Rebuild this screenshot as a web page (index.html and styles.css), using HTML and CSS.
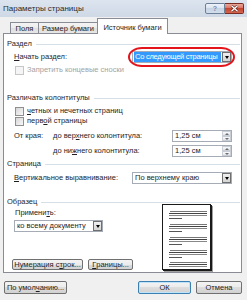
FILE: index.html
```html
<!DOCTYPE html>
<html lang="ru">
<head>
    <meta charset="UTF-8">
    <title>Параметры страницы</title>
    <link rel="stylesheet" href="styles.css">
</head>
<body>
    <!-- заголовок окна -->
    <div class="titlebar">
        <span class="title">Параметры страницы</span>
        <div class="caption">
            <span class="cap-btn cap-help">?</span>
            <span class="cap-btn cap-close">
                <svg width="9" height="7" viewBox="0 0 9 7"><path d="M1.5 0.8 L7.5 6.2 M7.5 0.8 L1.5 6.2" stroke="#5a1d16" stroke-width="2.6"/><path d="M1.5 0.8 L7.5 6.2 M7.5 0.8 L1.5 6.2" stroke="#fff" stroke-width="1.4"/></svg>
            </span>
        </div>
    </div>

    <!-- вкладки -->
    <div class="tabs">
        <span class="tab tab-fields">Поля</span>
        <span class="tab tab-size">Размер бумаги</span>
        <span class="tab tab-source active">Источник бумаги</span>
    </div>

    <div class="panel">
        <div class="group-title">Раздел</div>
        <div class="row row-start">
            <span class="label"><u>Н</u>ачать раздел:</span>
            <div class="combo combo-start">
                <span class="combo-text selected">Со следующей страницы</span>
                <span class="drop"></span>
                <span class="mark"></span>
            </div>
        </div>
        <div class="row row-check">
            <span class="check disabled"></span>
            <span class="label muted">Запретить концевые сноски</span>
        </div>

        <div class="group-title gt-headers">Различать колонтитулы</div>
        <div class="row row-check row-cb1">
            <span class="check"></span>
            <span class="label"><u>ч</u>етных и нечетных страниц</span>
        </div>
        <div class="row row-check">
            <span class="check"></span>
            <span class="label">перв<u>о</u>й страницы</span>
        </div>
        <div class="row row-spin">
            <span class="edge-label">От края:</span>
            <span class="label">до вер<u>х</u>него колонтитула:</span>
            <div class="spin">
                <span class="spin-text">1,25 см</span>
                <span class="spin-btns"><span class="spin-btn up"></span><span class="spin-btn down"></span></span>
            </div>
        </div>
        <div class="row row-spin row-spin2">
            <span class="edge-label"></span>
            <span class="label">до ни<u>ж</u>него колонтитула:</span>
            <div class="spin">
                <span class="spin-text">1,25 см</span>
                <span class="spin-btns"><span class="spin-btn up"></span><span class="spin-btn down"></span></span>
            </div>
        </div>

        <div class="group-title gt-page">Страница</div>
        <div class="row row-valign">
            <span class="label"><u>В</u>ертикальное выравнивание:</span>
            <div class="combo combo-valign">
                <span class="combo-text">По верхнему краю</span>
                <span class="drop"></span>
            </div>
        </div>

        <div class="group-title gt-sample">Образец</div>
        <div class="sample">
            <div class="sample-left">
                <div class="apply-label">Примени<u>т</u>ь:</div>
                <div class="combo combo-apply">
                    <span class="combo-text">ко всему документу</span>
                    <span class="drop"></span>
                </div>
                <div class="line-btns">
                    <span class="btn btn-numbering">Нумерация с<u>т</u>рок...</span>
                    <span class="btn btn-borders"><u>Г</u>раницы...</span>
                </div>
            </div>
            <div class="page">
                <svg width="47" height="64" viewBox="0 0 47 64">
                    <defs>
                        <g id="para">
                            <path d="M7 0.5 H44" stroke="#777" />
                            <path d="M6 2.5 H44" stroke="#444" />
                            <path d="M6 4.5 H44" stroke="#888" />
                            <path d="M6 7.5 H19" stroke="#555" />
                        </g>
                    </defs>
                    <use href="#para" y="6"/>
                    <use href="#para" y="19"/>
                    <use href="#para" y="32"/>
                    <use href="#para" y="45"/>
                    <use href="#para" y="57"/>
                </svg>
            </div>
        </div>
    </div>

    <!-- кнопки окна -->
    <div class="footer">
        <span class="btn btn-default">По умол<u>ч</u>анию...</span>
        <span class="btn btn-ok">ОК</span>
        <span class="btn btn-cancel">Отмена</span>
    </div>
</body>
</html>
```

FILE: styles.css
```css
*{
    margin: 0;
    padding: 0;
    box-sizing: border-box;
}
body{
    width: 247px;
    height: 300px;
    overflow: hidden;
    background-color: #f0f0f0;
    font-family: "Liberation Sans", Arial, sans-serif;
    font-size: 7.5px;
    color: #1e1e1e;
}
u{
    text-decoration-thickness: 1px;
    text-underline-offset: 1px;
}

/* заголовок */
.titlebar{
    height: 17px;
    display: flex;
    align-items: flex-start;
    background: linear-gradient(#dbe4ef, #cfd9e6);
}
.title{
    margin: 4px 0 0 3px;
    font-size: 8px;
    line-height: 9px;
    color: #2b2b2b;
}
.caption{
    display: flex;
    margin: 3px 3px 0 auto;
}
.cap-btn{
    height: 11px;
    display: flex;
    align-items: center;
    justify-content: center;
    border: 1px solid #6e7f98;
}
.cap-help{
    width: 20px;
    border-radius: 2px 0 0 2px;
    background: linear-gradient(#eef3fa, #d8e2ee 50%, #c6d4e5 50%, #d2deec);
    color: #7a8ca6;
    font-size: 7px;
    font-weight: bold;
}
.cap-close{
    width: 19px;
    border-left: none;
    border-color: #7a2b22;
    border-radius: 0 2px 2px 0;
    background: linear-gradient(#e8a89a, #d7715f 50%, #c4452f 50%, #d26650);
}

/* вкладки */
.tabs{
    height: 16px;
    display: flex;
    align-items: flex-end;
    padding-left: 10px;
    position: relative;
    z-index: 1;
}
.tab{
    height: 11px;
    display: flex;
    align-items: center;
    justify-content: center;
    line-height: 9px;
    border: 1px solid #898c95;
    border-bottom: none;
    margin-right: -1px;
    background: linear-gradient(#f4f4f4, #ececec 50%, #dfdfdf 50%, #e6e6e6);
    white-space: nowrap;
}
.tab-fields{ width: 29px; }
.tab-size{ width: 60px; }
.tab-source{ width: 71px; }
.tab.active{
    height: 16px;
    margin-bottom: -1px;
    padding-top: 1px;
    background: #fff;
}

/* панель */
.panel{
    margin-left: 3px;
    width: 239px;
    height: 240px;
    border: 1px solid #898c95;
    background-color: #fff;
    padding: 0 1px 0 3px;
}
.group-title{
    display: flex;
    align-items: center;
    height: 8px;
    line-height: 8px;
    margin-top: 6px;
    white-space: nowrap;
}
.group-title::after{
    content: "";
    flex: 1;
    border-top: 1px solid #d5dfe5;
    margin-left: 4px;
}
.gt-headers{ margin-top: 19px; }
.gt-page{ margin-top: 3px; }
.gt-sample{ margin-top: 14px; }

.row{
    display: flex;
    align-items: center;
    padding: 0 8px 0 7px;
    white-space: nowrap;
    line-height: 8px;
}
.row-start{
    height: 12px;
    margin-top: 3px;
}
.row-check{
    height: 10px;
    margin-top: 2px;
}
.row-cb1{ margin-top: 4px; }
.row-cb1 + .row-check{ margin-top: 0; }
.row-spin{
    height: 12px;
    margin-top: 4px;
}
.row-spin2{ margin-top: 3px; }
.row-valign{
    height: 12px;
    margin-top: 4px;
}
.edge-label{ width: 39px; }
.muted{ color: #a3a3a3; }

.check{
    width: 9px;
    height: 9px;
    margin: 0 3px 0 1px;
    border: 1px solid #8f8f8f;
    background: linear-gradient(135deg, #d6d6d6, #f8f8f8);
}
.check.disabled{
    border-color: #c6c6c6;
    background: #f5f5f5;
}

/* выпадающие списки */
.combo{
    position: relative;
    height: 12px;
    margin-left: auto;
    display: flex;
    align-items: center;
    border: 1px solid #a5acb5;
    background-color: #fff;
}
.combo-start{ width: 100px; }
.combo-valign{ width: 100px; }
.combo-text{
    flex: 1;
    height: 10px;
    line-height: 10px;
    padding-left: 2px;
    white-space: nowrap;
    overflow: hidden;
}
.combo-text.selected{
    margin: 0 1px;
    padding-left: 1px;
    letter-spacing: -0.25px;
    background-color: #3399ff;
    color: #fff;
}
.drop{
    position: relative;
    width: 9px;
    height: 10px;
    border: 1px solid #6f6f6f;
    background: linear-gradient(#f0f0f0, #d4d4d4);
}
.drop::after{
    content: "";
    position: absolute;
    left: 1.5px;
    top: 3px;
    border-left: 2.5px solid transparent;
    border-right: 2.5px solid transparent;
    border-top: 3px solid #000;
}
.mark{
    position: absolute;
    left: -5px;
    top: -5px;
    width: 107px;
    height: 20px;
    border: 2px solid #e3141c;
    border-radius: 14px / 10px;
}

/* счетчики */
.spin{
    width: 60px;
    height: 12px;
    margin-left: auto;
    display: flex;
    border: 1px solid #a5acb5;
    background-color: #fff;
}
.spin-text{
    flex: 1;
    line-height: 10px;
    padding-left: 2px;
}
.spin-btns{
    width: 9px;
    display: flex;
    flex-direction: column;
}
.spin-btn{
    position: relative;
    flex: 1;
    border: 1px solid #c9ced6;
    background: linear-gradient(#f8f9fa, #e2e5ea);
}
.spin-btn::after{
    content: "";
    position: absolute;
    left: 1.5px;
    top: 1px;
    border-left: 2px solid transparent;
    border-right: 2px solid transparent;
}
.spin-btn.up::after{ border-bottom: 2px solid #6d6d6d; }
.spin-btn.down::after{ border-top: 2px solid #6d6d6d; }

/* образец */
.sample{
    display: flex;
}
.sample-left{
    width: 155px;
    padding-left: 5px;
}
.apply-label{
    height: 8px;
    line-height: 8px;
    margin: 3px 0 0 3px;
}
.combo-apply{
    width: 89px;
    margin: 3px 0 0 2px;
}
.line-btns{
    display: flex;
    gap: 5px;
    margin-top: 27px;
}
.page{
    width: 49px;
    height: 66px;
    margin-top: -2px;
    border: 1px solid #1a1a1a;
    background-color: #fff;
    box-shadow: 1px 1px 0 #1a1a1a, 2px 2px 0 #a0a0a0;
}
.page svg{
    display: block;
}

/* кнопки */
.btn{
    height: 11px;
    display: flex;
    align-items: center;
    justify-content: center;
    line-height: 9px;
    white-space: nowrap;
    border: 1px solid #707070;
    border-radius: 2px;
    background: linear-gradient(#f3f3f3, #ebebeb 50%, #dddddd 50%, #d1d1d1);
}
.btn-numbering{ width: 71px; }
.btn-borders{ width: 45px; }

.footer{
    display: flex;
    padding: 0 5px 0 4px;
    margin-top: 8px;
}
.footer .btn{ height: 13px; }
.btn-default{ width: 63px; }
.btn-ok{
    width: 53px;
    margin-left: auto;
    border-color: #3c7fb1;
    box-shadow: inset 0 0 0 1px #bfe3f8;
}
.btn-cancel{
    width: 46px;
    margin-left: 5px;
}
```
